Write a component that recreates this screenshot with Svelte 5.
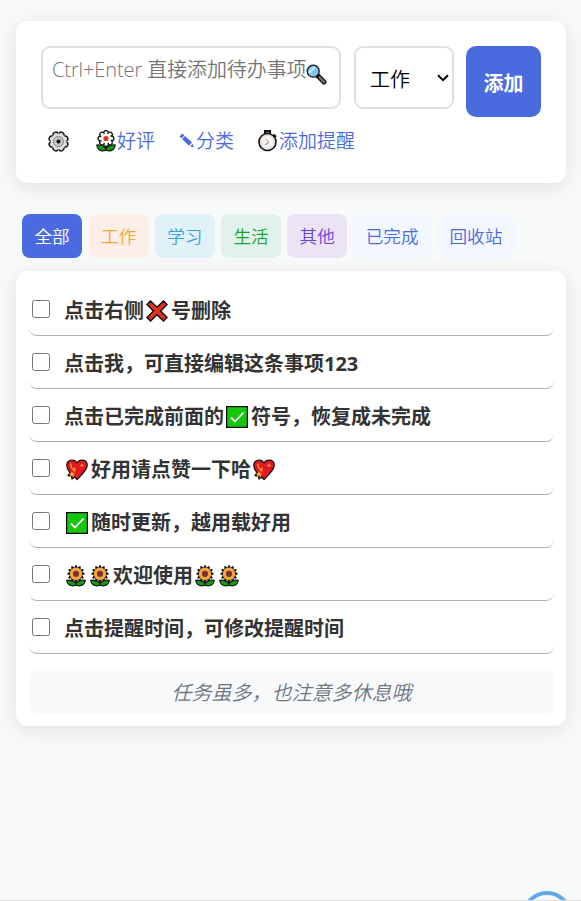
<script>
  let draft = '';
  let category = '工作';
  let active = 'all';

  const filters = [
    { id: 'all', label: '全部' },
    { id: 'work', label: '工作' },
    { id: 'study', label: '学习' },
    { id: 'life', label: '生活' },
    { id: 'other', label: '其他' },
    { id: 'done', label: '已完成' },
    { id: 'trash', label: '回收站' }
  ];

  // parts starting with ":" are icons, everything else is plain text
  let todos = [
    { done: false, parts: ['点击右侧', ':cross', '号删除'] },
    { done: false, parts: ['点击我，可直接编辑这条事项123'] },
    { done: false, parts: ['点击已完成前面的', ':check', '符号，恢复成未完成'] },
    { done: false, parts: [':heart', '好用请点赞一下哈', ':heart'] },
    { done: false, parts: [':check', '随时更新，越用载好用'] },
    { done: false, parts: [':sunflower', ':sunflower', '欢迎使用', ':sunflower', ':sunflower'] },
    { done: false, parts: ['点击提醒时间，可修改提醒时间'] }
  ];

  const petals = [0, 45, 90, 135, 180, 225, 270, 315];
  const rays = [0, 30, 60, 90, 120, 150, 180, 210, 240, 270, 300, 330];

  function addTodo() {
    if (!draft.trim()) return;
    todos = [{ done: false, parts: [draft.trim()] }, ...todos];
    draft = '';
  }

  function onKeydown(e) {
    if (e.ctrlKey && e.key === 'Enter') addTodo();
  }
</script>

{#snippet icon(name)}
  {#if name === 'cross'}
    <svg class="emoji" width="22" height="22" viewBox="0 0 22 22">
      <path d="M4.5 1L11 7.2L17.5 1L21 4.5L14.6 11L21 17.5L17.5 21L11 14.8L4.5 21L1 17.5L7.4 11L1 4.5Z" fill="#e0301e" stroke="#111" stroke-width="1.5"/>
    </svg>
  {:else if name === 'check'}
    <svg class="emoji" width="22" height="22" viewBox="0 0 22 22">
      <rect x=".6" y=".6" width="20.8" height="20.8" fill="#16c60c" stroke="#000" stroke-width="1.2"/>
      <path d="M5 11.5L9 15.5L17.5 6.5" fill="none" stroke="#fff" stroke-width="1.8"/>
    </svg>
  {:else if name === 'heart'}
    <svg class="emoji" width="22" height="22" viewBox="0 0 22 22">
      <path d="M11 20.5L8.5 18L6 20L5.5 17L2 16.5L4 13.5C1.5 10.5 .8 8 .8 6.3C.8 3.2 3 1.2 6 1.2C8.3 1.2 10 2.3 11 4C12 2.3 13.7 1.2 16 1.2C19 1.2 21.2 3.2 21.2 6.3C21.2 11 15.5 16 11 20.5Z" fill="#e3191f" stroke="#111" stroke-width="1.3" stroke-linejoin="round"/>
      <path d="M16 4L16.6 5.8L18.3 6.4L16.6 7L16 8.8L15.4 7L13.7 6.4L15.4 5.8Z" fill="#f7a343"/>
      <path d="M4.5 4.5L5.5 8.5L8.5 12M8.8 8.5V12.5" fill="none" stroke="#f9a83a" stroke-width="1.2"/>
      <path d="M6 12L7 14.2L9.2 14.4L7.6 16L8 18L6 16.8L4.2 18L4.5 16L3 14.4L5 14.2Z" fill="#f9a83a"/>
    </svg>
  {:else if name === 'sunflower'}
    <svg class="emoji narrow" width="20" height="22" viewBox="0 0 20 22">
      <path d="M10 20.5V15M9.5 20.5C4 22 1 19 .8 15.3C4 14.5 8 16 9.7 18.5C12 16 16 14.5 19.2 15.3C19 19 16 22 10.5 20.5Z" fill="#139a16" stroke="#111" stroke-width="1.2"/>
      {#each rays as a}
        <path d="M8 5L10 .8L12 5Z" fill="#f7a53b" stroke="#111" stroke-width="1.5" stroke-linejoin="round" transform="rotate({a} 10 8.8)"/>
      {/each}
      <circle cx="10" cy="8.8" r="6.3" fill="#f7a53b"/>
      <circle cx="10" cy="8.8" r="3.1" fill="#793030"/>
    </svg>
  {/if}
{/snippet}

<div class="page">
  <section class="card composer">
    <div class="input-row">
      <div class="input-wrap">
        <textarea bind:value={draft} on:keydown={onKeydown} placeholder="Ctrl+Enter 直接添加待办事项"></textarea>
        <svg class="search-icon" width="21" height="21" viewBox="0 0 21 21">
          <path d="M11.5 11.5L18 18" stroke="#111" stroke-width="5" stroke-linecap="round"/>
          <path d="M13.5 13.5L18 18" stroke="#6b6b6b" stroke-width="2.6" stroke-linecap="round"/>
          <circle cx="7.2" cy="7.2" r="6" fill="#81c3f3" stroke="#111" stroke-width="1.2"/>
          <path d="M3.2 8.8L9 3" stroke="#d0ecff" stroke-width="2"/>
        </svg>
      </div>
      <div class="select-wrap">
        <select bind:value={category}>
          <option>工作</option>
          <option>学习</option>
          <option>生活</option>
          <option>其他</option>
        </select>
        <svg class="chevron" width="12" height="8" viewBox="0 0 12 8">
          <path d="M1 1.2L6 6.2L11 1.2" fill="none" stroke="#000" stroke-width="2"/>
        </svg>
      </div>
      <button class="add-btn" on:click={addTodo}>添加</button>
    </div>

    <div class="tools">
      <a class="tool settings" href="#settings" aria-label="设置">
        <svg width="21" height="21" viewBox="0 0 21 21">
          {#each petals as a}
            <circle cx="10.5" cy="3.2" r="2.6" fill="#dcdcdc" stroke="#111" stroke-width="1.5" transform="rotate({a + 22.5} 10.5 10.5)"/>
          {/each}
          <circle cx="10.5" cy="10.5" r="8" fill="#dcdcdc"/>
          <circle cx="10.5" cy="10.5" r="5" fill="#c4c4c4" stroke="#888" stroke-width="1"/>
          <circle cx="10.5" cy="10.5" r="2" fill="#000"/>
        </svg>
      </a>
      <a class="tool rate" href="#rate">
        <svg width="20" height="22" viewBox="0 0 20 22">
          <path d="M10 20.5V15M9.5 20.5C4 22 1 19 .8 15C4 14.5 8 16 9.7 18.5C12 16 16 14.5 19.2 15C19 19 16 22 10.5 20.5Z" fill="#139a16" stroke="#111" stroke-width="1.2"/>
          {#each petals as a}
            <circle cx="10" cy="3" r="2.4" fill="#fff" stroke="#111" stroke-width="1.3" transform="rotate({a} 10 8.5)"/>
          {/each}
          <circle cx="10" cy="8.5" r="5" fill="#fff"/>
          <circle cx="10" cy="8.5" r="2.6" fill="#e0301e"/>
        </svg>好评
      </a>
      <a class="tool sort" href="#sort">
        <svg width="16" height="16" viewBox="0 0 16 16">
          <path d="M.5 3.6L3.4 .6L5.3 2.4L2.4 5.4ZM3.1 6L6 3L13 9.6L10 12.7ZM11.2 13.2L13.6 10.8L14.8 14.5Z" fill="#4a6bdf"/>
        </svg>分类
      </a>
      <a class="tool remind" href="#remind">
        <svg width="20" height="22" viewBox="0 0 20 22">
          <path d="M7 1H12V4H7ZM15.5 4.5L18 7" fill="#777" stroke="#111" stroke-width="2"/>
          <circle cx="9.5" cy="12" r="8.5" fill="#f4f4f4" stroke="#111" stroke-width="1.6"/>
          <circle cx="9.5" cy="12" r="6.8" fill="none" stroke="#ccc" stroke-width=".8"/>
          <path d="M7.5 9L10.5 12" stroke="#e78a3c" stroke-width="1"/>
          <path d="M10.5 12L7.5 15" stroke="#555" stroke-width="1"/>
        </svg>添加提醒
      </a>
    </div>
  </section>

  <nav class="filters">
    {#each filters as f}
      <button class="filter {f.id}" class:active={active === f.id} on:click={() => (active = f.id)}>{f.label}</button>
    {/each}
  </nav>

  <section class="card list">
    <ul>
      {#each todos as todo}
        <li>
          <input type="checkbox" bind:checked={todo.done} />
          <span class="text">
            {#each todo.parts as part}{#if part.startsWith(':')}{@render icon(part.slice(1))}{:else}<span>{part}</span>{/if}{/each}
          </span>
        </li>
      {/each}
    </ul>
    <p class="tip">任务虽多，也注意多休息哦</p>
  </section>

  <div class="ring"></div>
</div>

<style>
  :global(body) {
    margin: 0;
    background: #f8faf9;
  }

  .page {
    position: relative;
    box-sizing: border-box;
    height: 901px;
    padding: 21px 15px 0 16px;
    overflow: hidden;
    border-bottom: 1px solid #dedede;
    font-family: 'Open Sans', 'Noto Sans CJK SC', sans-serif;
    font-weight: 350;
    color: #333;
  }

  .card {
    box-sizing: border-box;
    background: #fff;
    border-radius: 12px;
    box-shadow: 0 4px 20px rgba(0, 0, 0, 0.1);
  }

  textarea,
  select,
  button {
    box-sizing: border-box;
    margin: 0;
    font: inherit;
  }

  .composer {
    height: 162px;
    padding: 25px;
  }

  .input-row {
    display: flex;
    align-items: flex-start;
    height: 71px;
  }

  .input-wrap {
    position: relative;
    width: 300px;
    height: 63px;
    margin-right: 13px;
  }

  textarea {
    display: block;
    width: 100%;
    height: 100%;
    padding: 8px 9px 6px;
    border: 2px solid #e0e0e0;
    border-radius: 9px;
    background: #fff;
    font-size: 20px;
    line-height: 28px;
    letter-spacing: -0.1px;
    resize: none;
    overflow: hidden;
    outline: none;
  }

  textarea::placeholder {
    color: #757575;
  }

  .search-icon {
    position: absolute;
    top: 18px;
    left: 265px;
  }

  .select-wrap {
    position: relative;
    width: 100px;
    height: 63px;
    margin-right: 12px;
  }

  select {
    width: 100%;
    height: 100%;
    padding: 3px 14px 0;
    border: 2px solid #e0e0e0;
    border-radius: 9px;
    background: #fff;
    color: #000;
    font-size: 20px;
    appearance: none;
  }

  .chevron {
    position: absolute;
    top: 28px;
    right: 5px;
    pointer-events: none;
  }

  .add-btn {
    width: 75px;
    height: 71px;
    padding: 1px 0 0;
    border: none;
    border-radius: 10px;
    background: #4a6bdf;
    color: #fff;
    font-size: 20px;
    font-weight: 700;
    cursor: pointer;
  }

  .tools {
    display: flex;
    align-items: center;
    height: 26px;
    margin-top: 11px;
    padding-left: 7px;
  }

  .tool {
    display: flex;
    align-items: center;
    color: #4a6bdf;
    font-size: 19px;
    line-height: 26px;
    text-decoration: none;
    white-space: nowrap;
  }

  .settings {
    margin-right: 27px;
  }

  .rate svg,
  .remind svg,
  .sort svg {
    margin-right: 1px;
  }

  .rate {
    margin-right: 24px;
  }

  .sort {
    margin-right: 24px;
  }

  .filters {
    display: flex;
    gap: 6.2px;
    margin: 31px 0 13px 6px;
  }

  .filter {
    height: 44px;
    padding: 0 12.4px 2px;
    border: none;
    border-radius: 8px;
    background: #f3f7ff;
    color: #4a6bdf;
    font-size: 17.6px;
    white-space: nowrap;
    cursor: pointer;
  }

  .work {
    background: #fbefe7;
    color: #f0a830;
  }

  .study {
    background: #e0f2f8;
    color: #3a9fe0;
  }

  .life {
    background: #e1f2ec;
    color: #16a62c;
  }

  .other {
    background: #ebe4f4;
    color: #6545d8;
  }

  .filter.active {
    margin-right: 0.5px;
    background: #4a6bdf;
    color: #fff;
  }

  .list {
    height: 455px;
    padding: 12px 12px 12px 13px;
  }

  ul {
    margin: 0;
    padding: 0;
    list-style: none;
  }

  li {
    box-sizing: border-box;
    display: flex;
    align-items: center;
    height: 53px;
    padding-left: 3px;
    border-bottom: 1px solid #b0b0b0;
    border-radius: 8px;
  }

  li input {
    width: 18px;
    height: 18px;
    margin: 0 14px 0 0;
  }

  .text {
    display: flex;
    align-items: center;
    padding-top: 3px;
    font-size: 20px;
    font-weight: 700;
    line-height: 28px;
    white-space: nowrap;
  }

  .emoji {
    margin: 0 3px 0 2px;
  }

  .emoji.narrow {
    margin: 0 3px 0 1.5px;
  }

  .tip {
    height: 45px;
    margin: 15px 0 0;
    border-radius: 10px;
    background: #f8f9fb;
    color: #6c757d;
    font-size: 20px;
    font-style: italic;
    line-height: 47px;
    text-align: center;
  }

  /* floating button peeking in from the bottom edge */
  .ring {
    position: absolute;
    right: 9px;
    bottom: -41px;
    box-sizing: border-box;
    width: 50px;
    height: 50px;
    border: 4px solid #5faaec;
    border-radius: 50%;
    background: #f8faf9;
  }
</style>
